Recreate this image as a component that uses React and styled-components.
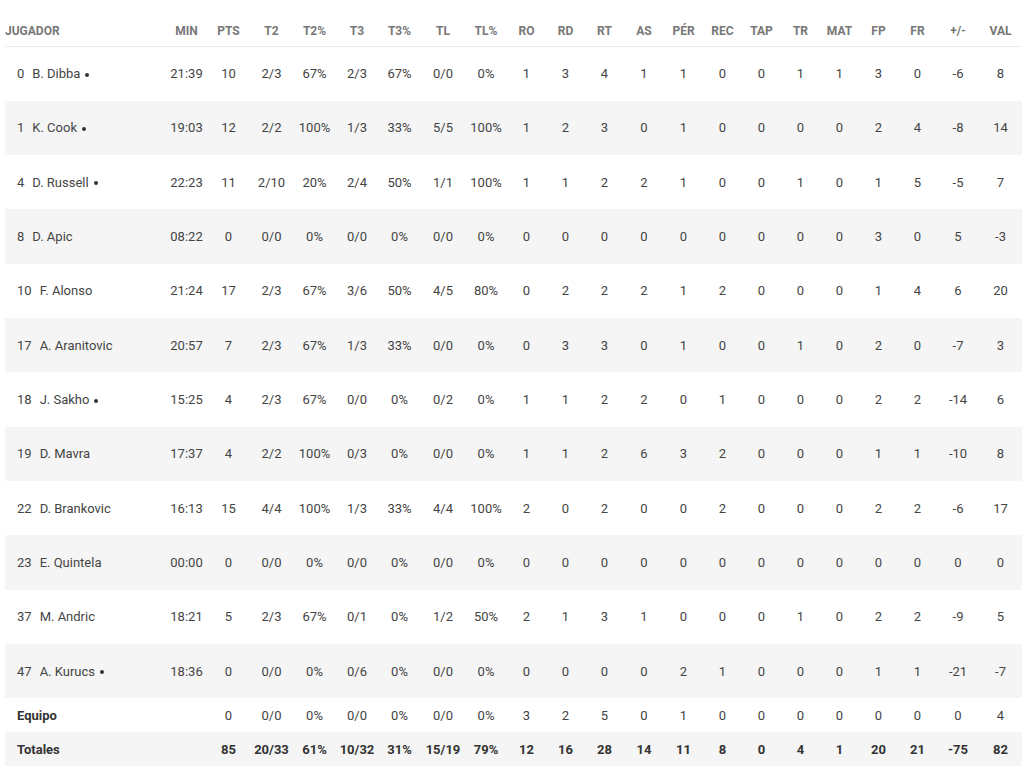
import styled, { createGlobalStyle } from 'styled-components';

const GlobalStyle = createGlobalStyle`
  body {
    margin: 0;
    background: #fff;
    font-family: Roboto, 'Liberation Sans', sans-serif;
  }
`;

const COLUMNS = [
  { key: 'JUGADOR', w: 161 },
  { key: 'MIN', w: 41 },
  { key: 'PTS', w: 43 },
  { key: 'T2', w: 43 },
  { key: 'T2%', w: 43 },
  { key: 'T3', w: 42 },
  { key: 'T3%', w: 43 },
  { key: 'TL', w: 44 },
  { key: 'TL%', w: 42 },
  { key: 'RO', w: 39 },
  { key: 'RD', w: 39 },
  { key: 'RT', w: 39 },
  { key: 'AS', w: 40 },
  { key: 'PÉR', w: 39 },
  { key: 'REC', w: 39 },
  { key: 'TAP', w: 39 },
  { key: 'TR', w: 39 },
  { key: 'MAT', w: 39 },
  { key: 'FP', w: 39 },
  { key: 'FR', w: 39 },
  { key: '+/-', w: 42 },
  { key: 'VAL', w: 43 },
];

const players = [
  { num: 0, name: 'B. Dibba', starter: true, stats: ['21:39', 10, '2/3', '67%', '2/3', '67%', '0/0', '0%', 1, 3, 4, 1, 1, 0, 0, 1, 1, 3, 0, -6, 8] },
  { num: 1, name: 'K. Cook', starter: true, stats: ['19:03', 12, '2/2', '100%', '1/3', '33%', '5/5', '100%', 1, 2, 3, 0, 1, 0, 0, 0, 0, 2, 4, -8, 14] },
  { num: 4, name: 'D. Russell', starter: true, stats: ['22:23', 11, '2/10', '20%', '2/4', '50%', '1/1', '100%', 1, 1, 2, 2, 1, 0, 0, 1, 0, 1, 5, -5, 7] },
  { num: 8, name: 'D. Apic', stats: ['08:22', 0, '0/0', '0%', '0/0', '0%', '0/0', '0%', 0, 0, 0, 0, 0, 0, 0, 0, 0, 3, 0, 5, -3] },
  { num: 10, name: 'F. Alonso', stats: ['21:24', 17, '2/3', '67%', '3/6', '50%', '4/5', '80%', 0, 2, 2, 2, 1, 2, 0, 0, 0, 1, 4, 6, 20] },
  { num: 17, name: 'A. Aranitovic', stats: ['20:57', 7, '2/3', '67%', '1/3', '33%', '0/0', '0%', 0, 3, 3, 0, 1, 0, 0, 1, 0, 2, 0, -7, 3] },
  { num: 18, name: 'J. Sakho', starter: true, stats: ['15:25', 4, '2/3', '67%', '0/0', '0%', '0/2', '0%', 1, 1, 2, 2, 0, 1, 0, 0, 0, 2, 2, -14, 6] },
  { num: 19, name: 'D. Mavra', stats: ['17:37', 4, '2/2', '100%', '0/3', '0%', '0/0', '0%', 1, 1, 2, 6, 3, 2, 0, 0, 0, 1, 1, -10, 8] },
  { num: 22, name: 'D. Brankovic', stats: ['16:13', 15, '4/4', '100%', '1/3', '33%', '4/4', '100%', 2, 0, 2, 0, 0, 2, 0, 0, 0, 2, 2, -6, 17] },
  { num: 23, name: 'E. Quintela', stats: ['00:00', 0, '0/0', '0%', '0/0', '0%', '0/0', '0%', 0, 0, 0, 0, 0, 0, 0, 0, 0, 0, 0, 0, 0] },
  { num: 37, name: 'M. Andric', stats: ['18:21', 5, '2/3', '67%', '0/1', '0%', '1/2', '50%', 2, 1, 3, 1, 0, 0, 0, 1, 0, 2, 2, -9, 5] },
  { num: 47, name: 'A. Kurucs', starter: true, stats: ['18:36', 0, '0/0', '0%', '0/6', '0%', '0/0', '0%', 0, 0, 0, 0, 2, 1, 0, 0, 0, 1, 1, -21, -7] },
];

const team = ['', 0, '0/0', '0%', '0/0', '0%', '0/0', '0%', 3, 2, 5, 0, 1, 0, 0, 0, 0, 0, 0, 0, 4];
const totals = ['', 85, '20/33', '61%', '10/32', '31%', '15/19', '79%', 12, 16, 28, 14, 11, 8, 0, 4, 1, 20, 21, -75, 82];

const Wrapper = styled.div`
  padding: 15px 0 0 5px;
`;

const Table = styled.table`
  width: 1017px;
  table-layout: fixed;
  border-collapse: collapse;
  font-size: 13px;
  color: #444;
`;

const Col = styled.col`
  width: ${(p) => p.$w}px;
`;

const HeadCell = styled.th`
  height: 31px;
  padding: 0;
  font-size: 12px;
  font-weight: 700;
  color: #777;
  text-align: ${(p) => (p.$left ? 'left' : 'center')};
  border-bottom: 1px solid #ececec;
  white-space: nowrap;
`;

const Row = styled.tr`
  height: ${(p) => (p.$compact ? '34px' : '54.33px')};
  background: ${(p) => (p.$striped ? '#f5f5f5' : '#fff')};
  font-weight: ${(p) => (p.$bold ? 700 : 400)};
  color: ${(p) => (p.$bold ? '#333' : '#444')};
`;

const Cell = styled.td`
  padding: 0;
  text-align: center;
  white-space: nowrap;
`;

const PlayerCell = styled.td`
  padding: 0 0 0 12px;
  text-align: left;
  white-space: nowrap;
  font-weight: ${(p) => (p.$bold ? 700 : 400)};
  color: ${(p) => (p.$bold ? '#333' : '#444')};
`;

const Dorsal = styled.span`
  margin-right: 8px;
`;

// starter marker: small filled dot after the name
const Starter = styled.span`
  display: inline-block;
  width: 4px;
  height: 4px;
  margin-left: 5px;
  border-radius: 50%;
  background: #333;
  vertical-align: middle;
`;

const App = () => (
  <Wrapper>
    <GlobalStyle />
    <Table>
      <colgroup>
        {COLUMNS.map((c) => (
          <Col key={c.key} $w={c.w} />
        ))}
      </colgroup>
      <thead>
        <tr>
          {COLUMNS.map((c, i) => (
            <HeadCell key={c.key} $left={i === 0}>
              {c.key}
            </HeadCell>
          ))}
        </tr>
      </thead>
      <tbody>
        {players.map((p, i) => (
          <Row key={p.num} $striped={i % 2 === 1}>
            <PlayerCell>
              <Dorsal>{p.num}</Dorsal>
              {p.name}
              {p.starter && <Starter />}
            </PlayerCell>
            {p.stats.map((s, j) => (
              <Cell key={j}>{s}</Cell>
            ))}
          </Row>
        ))}
        <Row $compact>
          <PlayerCell $bold>Equipo</PlayerCell>
          {team.map((s, j) => (
            <Cell key={j}>{s}</Cell>
          ))}
        </Row>
        <Row $compact $striped $bold>
          <PlayerCell $bold>Totales</PlayerCell>
          {totals.map((s, j) => (
            <Cell key={j}>{s}</Cell>
          ))}
        </Row>
      </tbody>
    </Table>
  </Wrapper>
);

export default App;
